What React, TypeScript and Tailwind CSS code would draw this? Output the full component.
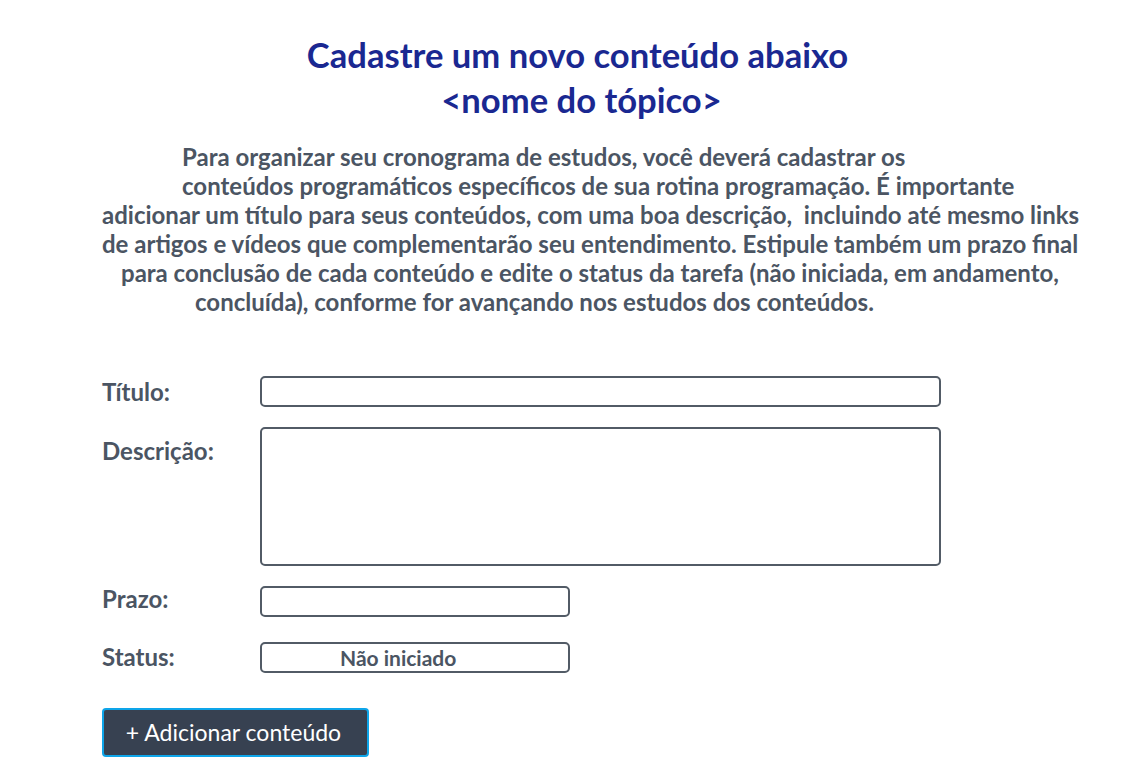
import React from "react";

const lines: { text: string; pl: number }[] = [
  { text: "Para organizar seu cronograma de estudos, você deverá cadastrar os", pl: 182 },
  { text: "conteúdos programáticos específicos de sua rotina programação. É importante", pl: 182 },
  { text: "adicionar um título para seus conteúdos, com uma boa descrição,\u00a0 incluindo até mesmo links", pl: 102 },
  { text: "de artigos e vídeos que complementarão seu entendimento. Estipule também um prazo final", pl: 102 },
  { text: "para conclusão de cada conteúdo e edite o status da tarefa (não iniciada, em andamento,", pl: 121 },
  { text: "concluída), conforme for avançando nos estudos dos conteúdos.", pl: 195 },
];

export default function App() {
  return (
    <div
      className="w-[1143px] h-[771px] bg-white overflow-hidden"
      style={{ fontFamily: "Lato, 'Noto Sans', sans-serif" }}
    >
      <h1 className="pt-[32px] pl-[12px] text-center text-[34.6px] leading-[45px] font-bold text-[#1a2891]">
        Cadastre um novo conteúdo abaixo
        <br />
        <span className="pl-[8px]">&lt;nome do tópico&gt;</span>
      </h1>
      <div className="mt-[20px] text-[24px] leading-[29px] font-bold text-[#4b5563]">
        {lines.map((l, i) => (
          <div key={i} style={{ paddingLeft: l.pl }} className="whitespace-nowrap">
            {l.text}
          </div>
        ))}
      </div>

      <form className="mt-[60px] pl-[102px] flex flex-col text-[24px] font-bold text-[#4b5563]">
        <div className="flex items-center h-[31px]">
          <label className="w-[158px]">Título:</label>
          <input className="w-[681px] h-[31px] border-2 border-[#525b66] rounded-[5px] bg-white" />
        </div>
        <div className="flex mt-[20px]">
          <label className="w-[158px] pt-[6px]">Descrição:</label>
          <textarea className="w-[681px] h-[139px] border-2 border-[#525b66] rounded-[5px] bg-white resize-none" />
        </div>
        <div className="flex items-center mt-[20px] h-[31px]">
          <label className="w-[158px] -mt-[6px]">Prazo:</label>
          <input className="w-[310px] h-[31px] border-2 border-[#525b66] rounded-[5px] bg-white" />
        </div>
        <div className="flex items-center mt-[25px] h-[31px]">
          <label className="w-[158px] -mt-[2px]">Status:</label>
          <div className="w-[310px] h-[31px] border-2 border-[#525b66] rounded-[5px] bg-white flex items-center pl-[78px] text-[21px] text-[#4b5563]">
            Não iniciado
          </div>
        </div>
        <div className="mt-[35px]">
          <button
            type="button"
            className="w-[267px] h-[49px] bg-[#374151] border-2 border-[#0ea5e9] rounded-[4px] text-white text-[23px] font-normal pr-[4px]"
          >
            + Adicionar conteúdo
          </button>
        </div>
      </form>
    </div>
  );
}
